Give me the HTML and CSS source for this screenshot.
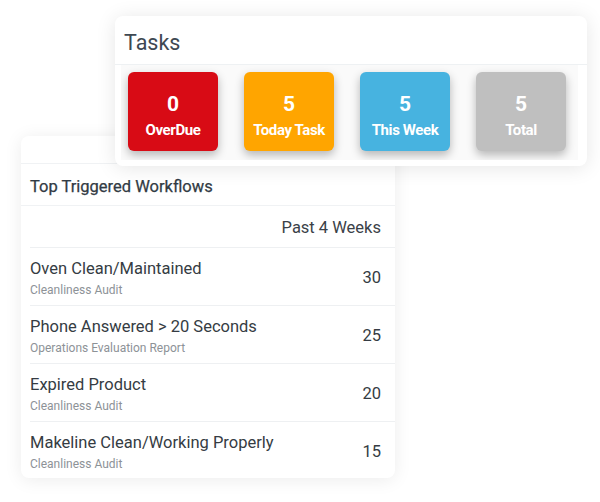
FILE: index.html
```html
<!DOCTYPE html>
<html>
<head>
<meta charset="utf-8">
<link rel="stylesheet" href="styles.css">
</head>
<body>
<div class="canvas">
  <section class="card workflows">
    <div class="wf-top"></div>
    <h2 class="wf-title">Top Triggered Workflows</h2>
    <div class="wf-period">Past 4 Weeks</div>
    <ul class="wf-list">
      <li class="wf-row"><div class="wf-text"><div class="wf-name">Oven Clean/Maintained</div><div class="wf-sub">Cleanliness Audit</div></div><div class="wf-count">30</div></li>
      <li class="wf-row"><div class="wf-text"><div class="wf-name">Phone Answered &gt; 20 Seconds</div><div class="wf-sub">Operations Evaluation Report</div></div><div class="wf-count">25</div></li>
      <li class="wf-row"><div class="wf-text"><div class="wf-name">Expired Product</div><div class="wf-sub">Cleanliness Audit</div></div><div class="wf-count">20</div></li>
      <li class="wf-row"><div class="wf-text"><div class="wf-name">Makeline Clean/Working Properly</div><div class="wf-sub">Cleanliness Audit</div></div><div class="wf-count">15</div></li>
    </ul>
  </section>
  <section class="card tasks">
    <h2 class="tasks-title">Tasks</h2>
    <div class="tiles">
      <div class="tile red"><div class="tile-num">0</div><div class="tile-label">OverDue</div></div>
      <div class="tile orange"><div class="tile-num">5</div><div class="tile-label">Today Task</div></div>
      <div class="tile blue"><div class="tile-num">5</div><div class="tile-label">This Week</div></div>
      <div class="tile gray"><div class="tile-num">5</div><div class="tile-label">Total</div></div>
    </div>
  </section>
</div>
</body>
</html>
```
FILE: styles.css
```css
* { box-sizing: border-box; }
html, body { margin: 0; padding: 0; background: #fff; }
body { font-family: Roboto, "Liberation Sans", sans-serif; color: #343a40; }
.canvas { position: relative; width: 600px; height: 502px; overflow: hidden; }

.card { background: #fff; position: absolute; }

.workflows {
  left: 21px; top: 136px; width: 374px; height: 342px;
  border-radius: 8px;
  box-shadow: 0 2px 18px rgba(0, 0, 0, 0.08);
  display: flex; flex-direction: column;
}
.wf-top { height: 28px; flex: none; border-bottom: 1px solid #f0f2f4; }
.wf-title {
  margin: 0; height: 42px; flex: none; padding: 3px 0 0 9px;
  display: flex; align-items: center;
  font-size: 16.5px; font-weight: 400; color: #323b44;
  -webkit-text-stroke: 0.25px #323b44;
  border-bottom: 1px solid #f0f2f4;
}
.wf-period {
  height: 42px; flex: none; margin-left: 9px; padding: 2px 14px 0 0;
  display: flex; align-items: center; justify-content: flex-end;
  font-size: 16.5px; color: #3a4148;
  border-bottom: 1px solid #eef0f2;
}
.wf-list { list-style: none; margin: 0 0 0 9px; padding: 0; }
.wf-row {
  height: 58px; padding: 11px 14px 0 0;
  display: flex; align-items: flex-start; justify-content: space-between;
  border-bottom: 1px solid #eef0f2;
}
.wf-row:last-child { border-bottom: none; }
.wf-name { font-size: 16.5px; line-height: 20px; color: #353c43; }
.wf-sub { font-size: 12px; line-height: 14px; margin-top: 4px; color: #8d9297; }
.wf-count { font-size: 16.5px; line-height: 20px; margin-top: 9px; color: #353c43; }

.tasks {
  left: 115px; top: 16px; width: 472px; height: 150px;
  border-radius: 8px;
  box-shadow: 0 2px 20px rgba(0, 0, 0, 0.1);
  display: flex; flex-direction: column;
}
.tasks-title {
  margin: 0; height: 49px; flex: none; padding: 5px 0 0 9px;
  display: flex; align-items: center;
  font-size: 21.5px; font-weight: 400; color: #3e4852;
  border-bottom: 1px solid #eef1f3;
}
.tiles {
  margin: 0 9px 0 6px; height: 95px; flex: none; overflow: hidden;
  display: flex; gap: 26px; padding: 7px 0 0 7px;
  background: #fafafa;
}
.tile {
  width: 90px; height: 79px; border-radius: 6px; flex: none;
  display: flex; flex-direction: column; align-items: center;
  color: #fff; font-weight: 700;
  box-shadow: 0 4px 10px rgba(0, 0, 0, 0.28);
}
.tile-num { font-size: 21px; line-height: 24px; margin-top: 20px; }
.tile-label { font-size: 15px; line-height: 18px; margin-top: 5px; letter-spacing: -0.4px; }
.red { background: #d80b15; }
.orange { background: #ffa500; }
.blue { background: #47b3e0; }
.gray { background: #bfbfbf; }
```
